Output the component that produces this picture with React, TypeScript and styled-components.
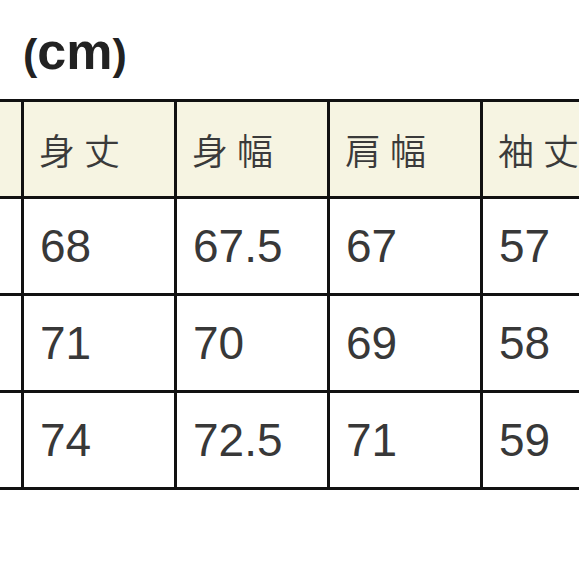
import styled, { createGlobalStyle } from 'styled-components'

const Global = createGlobalStyle`
    html, body {
        margin: 0;
        padding: 0;
        background: #ffffff;
        overflow: hidden;
    }
`

const Page = styled.div`
    width: 579px;
    height: 579px;
    overflow: hidden;
    background: #ffffff;
`

const Title = styled.h1`
    margin: 0;
    height: 99px;
    box-sizing: border-box;
    padding: 25px 0 0 23px;
    font-family: "Liberation Sans", Arial, sans-serif;
    font-weight: 700;
    font-size: 52px;
    line-height: 52px;
    color: #222222;
`

const Paren = styled.span`
    font-size: 43px;
`

const Grid = styled.div`
    display: grid;
    grid-template-columns: 21px repeat(4, 150px);
    grid-auto-rows: 94px;
    gap: 3px;
    padding: 3px 0;
    width: 633px;
    background: #111111;
`

const Cell = styled.div<{ $head?: boolean }>`
    display: flex;
    align-items: center;
    padding-left: ${p => (p.$head ? '15px' : '16px')};
    box-sizing: border-box;
    background: ${p => (p.$head ? '#f6f4e2' : '#ffffff')};
    color: ${p => (p.$head ? '#3a3a3a' : '#383838')};
    font-family: ${p =>
        p.$head
            ? '"Noto Sans CJK JP", "Noto Sans", sans-serif'
            : '"Liberation Sans", Arial, sans-serif'};
    font-size: ${p => (p.$head ? '36px' : '46px')};
    font-weight: ${p => (p.$head ? 350 : 400)};
    letter-spacing: ${p => (p.$head ? '9px' : '0')};
    white-space: nowrap;
    overflow: hidden;
`

const Stub = styled.div<{ $head?: boolean }>`
    background: ${p => (p.$head ? '#f6f4e2' : '#ffffff')};
`

const headers = ['身丈', '身幅', '肩幅', '袖丈']
const rows = [
    ['68', '67.5', '67', '57'],
    ['71', '70', '69', '58'],
    ['74', '72.5', '71', '59'],
]

export default function App() {
    return (
        <Page>
            <Global />
            <Title>
                <Paren>(</Paren>cm<Paren>)</Paren>
            </Title>
            <Grid>
                <Stub $head />
                {headers.map(h => (
                    <Cell $head key={h}>{h}</Cell>
                ))}
                {rows.map((r, i) => [
                    <Stub key={'s' + i} />,
                    ...r.map((v, j) => <Cell key={i + '-' + j}>{v}</Cell>),
                ])}
            </Grid>
        </Page>
    )
}
